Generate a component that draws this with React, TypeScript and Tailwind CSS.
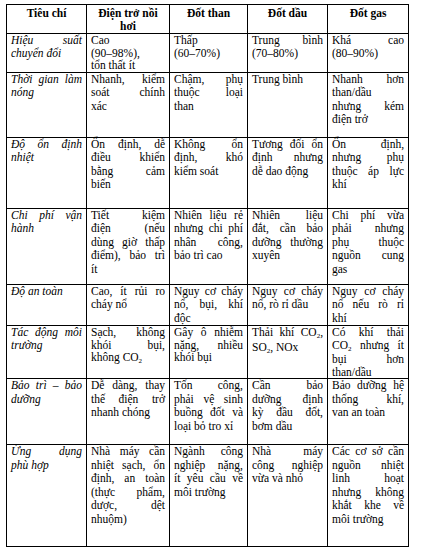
import React from "react";

type Cell = string[];
type Row = { h: number; tight?: boolean; label: string[]; cells: Cell[] };

const rows: Row[] = [
  {
    h: 37,
    tight: true,
    label: ["Hiệu suất", "chuyển đổi"],
    cells: [
      ["Cao", "(90–98%),", "tổn thất ít"],
      ["Thấp", "(60–70%)"],
      ["Trung bình", "(70–80%)"],
      ["Khá cao", "(80–90%)"],
    ],
  },
  {
    h: 65,
    label: ["Thời gian làm", "nóng"],
    cells: [
      ["Nhanh, kiểm", "soát chính", "xác"],
      ["Chậm, phụ", "thuộc loại", "than"],
      ["Trung bình"],
      ["Nhanh hơn", "than/dầu", "nhưng kém", "điện trở"],
    ],
  },
  {
    h: 71,
    label: ["Độ ổn định", "nhiệt"],
    cells: [
      ["Ổn định, dễ", "điều khiển", "bằng cảm", "biến"],
      ["Không ổn", "định, khó", "kiểm soát"],
      ["Tương đối ổn", "định nhưng", "dễ dao động"],
      ["Ổn định,", "nhưng phụ", "thuộc áp lực", "khí"],
    ],
  },
  {
    h: 76,
    label: ["Chi phí vận", "hành"],
    cells: [
      ["Tiết kiệm", "điện (nếu", "dùng giờ thấp", "điểm), bảo trì", "ít"],
      ["Nhiên liệu rẻ", "nhưng chi phí", "nhân công,", "bảo trì cao"],
      ["Nhiên liệu", "đắt, cần bảo", "dưỡng thường", "xuyên"],
      ["Chi phí vừa", "phải nhưng", "phụ thuộc", "nguồn cung", "gas"],
    ],
  },
  {
    h: 41,
    label: ["Độ an toàn"],
    cells: [
      ["Cao, ít rủi ro", "cháy nổ"],
      ["Nguy cơ cháy", "nổ, bụi, khí", "độc"],
      ["Nguy cơ cháy", "nổ, rò rỉ dầu"],
      ["Nguy cơ cháy", "nổ nếu rò rỉ", "khí"],
    ],
  },
  {
    h: 50,
    tight: true,
    label: ["Tác động môi", "trường"],
    cells: [
      ["Sạch, không", "khói bụi,", "không CO_2"],
      ["Gây ô nhiễm", "nặng, nhiều", "khói bụi"],
      ["Thải khí CO_2,", "SO_2, NOx"],
      ["Có khí thải", "CO_2 nhưng ít", "bụi hơn", "than/dầu"],
    ],
  },
  {
    h: 66,
    label: ["Bảo trì – bảo", "dưỡng"],
    cells: [
      ["Dễ dàng, thay", "thế điện trở", "nhanh chóng"],
      ["Tốn công,", "phải vệ sinh", "buồng đốt và", "loại bỏ tro xỉ"],
      ["Cần bảo", "dưỡng định", "kỳ đầu đốt,", "bơm dầu"],
      ["Bảo dưỡng hệ", "thống khí,", "van an toàn"],
    ],
  },
  {
    h: 102,
    label: ["Ứng dụng", "phù hợp"],
    cells: [
      ["Nhà máy cần", "nhiệt sạch, ổn", "định, an toàn", "(thực phẩm,", "dược, dệt", "nhuộm)"],
      ["Ngành công", "nghiệp nặng,", "ít yêu cầu về", "môi trường"],
      ["Nhà máy", "công nghiệp", "vừa và nhỏ"],
      ["Các cơ sở cần", "nguồn nhiệt", "linh hoạt", "nhưng không", "khắt khe về", "môi trường"],
    ],
  },
];

function renderText(t: string) {
  const parts = t.split("_2");
  const out: React.ReactNode[] = [];
  parts.forEach((p, i) => {
    out.push(<React.Fragment key={"p" + i}>{p}</React.Fragment>);
    if (i < parts.length - 1) {
      out.push(
        <span key={"s" + i} className="text-[7px] relative top-[2px]">
          2
        </span>
      );
    }
  });
  return out;
}

function Lines({ lines, tight }: { lines: string[]; tight?: boolean }) {
  const lh = tight ? " leading-[12.5px]" : " leading-[13.5px]";
  return (
    <>
      {lines.map((l, i) => {
        const last = i === lines.length - 1;
        return last ? (
          <div key={i} className={"text-left whitespace-nowrap" + lh}>
            {renderText(l)}
          </div>
        ) : (
          <div key={i} className={"text-justify [text-align-last:justify] whitespace-nowrap" + lh}>
            {renderText(l)}
          </div>
        );
      })}
    </>
  );
}

const cellBase = "border border-black px-[4px] pt-0 pb-0 align-top";

export default function App() {
  return (
    <div className="w-[421px] h-[554px] bg-white pt-[4px] pl-[6px]">
      <table
        className="border-collapse table-fixed w-[402px] text-black text-[11.5px] leading-[13px]"
        style={{ fontFamily: '"Liberation Serif", "Times New Roman", serif' }}
      >
        <colgroup>
          <col className="w-[80px]" />
          <col className="w-[83px]" />
          <col className="w-[78px]" />
          <col className="w-[80px]" />
          <col className="w-[81px]" />
        </colgroup>
        <thead>
          <tr className="h-[29px]">
            {[["Tiêu chí"], ["Điện trở nồi", "hơi"], ["Đốt than"], ["Đốt dầu"], ["Đốt gas"]].map(
              (h, i) => (
                <th key={i} className={cellBase + " font-bold text-center pt-[2px]"}>
                  {h.map((l, j) => (
                    <div key={j}>{l}</div>
                  ))}
                </th>
              )
            )}
          </tr>
        </thead>
        <tbody>
          {rows.map((r, ri) => (
            <tr key={ri} style={{ height: r.h }}>
              <td className={cellBase + " italic"}>
                <Lines lines={r.label} tight={r.tight} />
              </td>
              {r.cells.map((c, ci) => (
                <td key={ci} className={cellBase}>
                  <Lines lines={c} tight={r.tight} />
                </td>
              ))}
            </tr>
          ))}
        </tbody>
      </table>
    </div>
  );
}
